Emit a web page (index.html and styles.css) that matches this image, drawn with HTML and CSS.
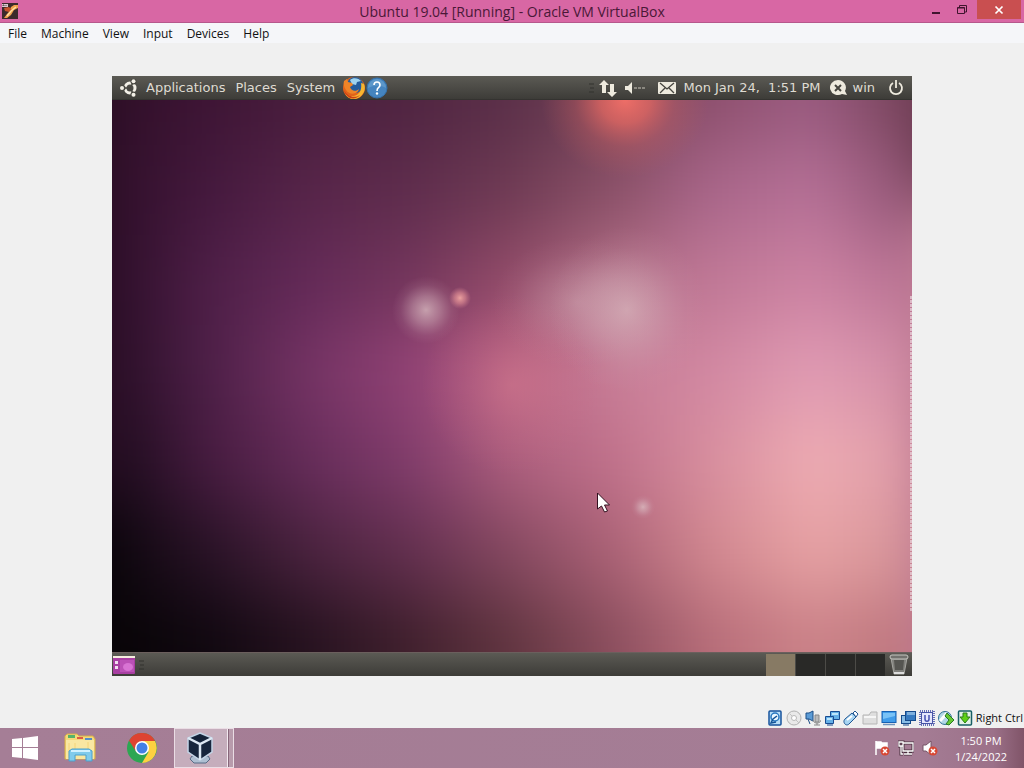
FILE: index.html
```html
<!DOCTYPE html>
<html lang="en">
<head>
    <meta charset="UTF-8">
    <meta name="viewport" content="width=device-width, initial-scale=1.0">
    <title>Ubuntu 19.04 [Running] - Oracle VM VirtualBox</title>
    <link rel="stylesheet" href="styles.css">
</head>
<body>
    <header class="titlebar">
        <svg class="app-icon" width="16" height="16" viewBox="0 0 16 16">
            <rect width="16" height="16" fill="#3c2a2b"/>
            <path d="M9 4l3-2h4v3l-4 2-3 5-4 3H2l3-4 2-2z" fill="#f2a04c"/>
            <path d="M2 5l5-1 3 3-3 2-4-1z" fill="#c4532c"/>
            <path d="M5 13l4-5 5-4" stroke="#ffe0a0" stroke-width="1.500" fill="none"/>
            <path d="M0 1h6v3H0z" fill="#d9c9cf"/>
            <path d="M1 3V2h1v1M4 3V2" stroke="#5b4349" fill="none"/>
        </svg>
        <h1 class="title">Ubuntu 19.04 [Running] - Oracle VM VirtualBox</h1>
        <div class="window-buttons">
            <button class="win-btn" aria-label="Minimize">
                <svg width="10" height="10" viewBox="0 0 10 10"><path d="M1 7h8v2H1z" fill="#40142e"/></svg>
            </button>
            <button class="win-btn" aria-label="Restore">
                <svg width="12" height="11" viewBox="0 0 12 11"><path d="M1.500 3.500h7v6h-7zM1.500 4h7M3.500 3V1.500h7V8H9" stroke="#40142e" fill="none"/></svg>
            </button>
            <button class="win-btn close" aria-label="Close">
                <svg width="10" height="10" viewBox="0 0 10 10"><path d="M1.500 1.500l7 7M8.500 1.500l-7 7" stroke="#fff" stroke-width="1.700"/></svg>
            </button>
        </div>
    </header>

    <nav class="menubar">
        <button>File</button>
        <button>Machine</button>
        <button>View</button>
        <button>Input</button>
        <button>Devices</button>
        <button>Help</button>
    </nav>

    <main class="viewport">
        <section class="guest">
            <div class="panel panel-top">
                <svg class="ubuntu" width="18" height="18" viewBox="0 0 18 18">
                    <circle cx="10" cy="9" r="5" fill="none" stroke="#f2efe6" stroke-width="3"/>
                    <path d="M10 9L4 9M10 9l4-7M10 9l4 7" stroke="#484741" stroke-width="1.500"/>
                    <circle cx="2.500" cy="9" r="3" fill="#484741"/><circle cx="13.500" cy="2.500" r="3" fill="#484741"/><circle cx="13.500" cy="15.500" r="3" fill="#484741"/>
                    <circle cx="2" cy="9" r="2" fill="#f2efe6"/><circle cx="13.500" cy="2.300" r="2" fill="#f2efe6"/><circle cx="13.500" cy="15.700" r="2" fill="#f2efe6"/>
                </svg>
                <button>Applications</button>
                <button>Places</button>
                <button>System</button>
                <span class="launchers">
                    <button aria-label="Firefox">
                        <svg width="24" height="24" viewBox="0 0 24 24">
                            <circle cx="12" cy="12" r="11" fill="#e2631a"/>
                            <circle cx="13" cy="9" r="8" fill="#245d9c"/>
                            <path d="M8 4c3-3 9-2 11 1l-4 1-1 3-4-1z" fill="#9ed3ee"/>
                            <path d="M2 5l3-2 1 3 4 1 1 2-3 2c1 4 6 5 9 2-1 5-9 7-13 1-2-3-3-6-2-9z" fill="#ef8427"/>
                            <path d="M22 8c3 7-3 15-10 15-4 0-7-2-9-5 8 5 18 1 16-11z" fill="#f6b530"/>
                            <path d="M2 14c3 6 10 9 16 5-5 6-14 4-16-5z" fill="#cc3f17"/>
                        </svg>
                    </button>
                    <button aria-label="Help">
                        <svg width="22" height="22" viewBox="0 0 22 22">
                            <circle cx="11" cy="11" r="10" fill="#4584bf" stroke="#3672ac"/>
                            <path d="M2 11a9 9 0 0 1 18 0c-5-3-12-3-18 0z" fill="#5c97ca"/>
                            <path d="M8 8c0-4 6-4 6 0 0 3-3 2-3 6" stroke="#fff" stroke-width="1.600" fill="none"/>
                            <circle cx="11" cy="16.500" r="1.200" fill="#fff"/>
                        </svg>
                    </button>
                </span>
                <div class="indicators">
                    <svg class="grip" width="6" height="10" viewBox="0 0 6 10"><path d="M0 1h5M1 5h4M0 9h5" stroke="#33322f"/></svg>
                    <svg class="net" width="18" height="18" viewBox="0 0 18 18"><path d="M5 1l5 5H7v8H3V6H0zM13 18l-5-5h3V5h4v8h3z" fill="#eeeade"/></svg>
                    <svg class="sound" width="22" height="14" viewBox="0 0 22 14"><path d="M0 5h3l4-4v12l-4-4H0z" fill="#eeeade"/><path d="M9 7h3M13 7h3M17 7h3" stroke="#c9c5ba"/></svg>
                    <svg class="mail" width="18" height="14" viewBox="0 0 18 14"><rect y="1" width="18" height="12" rx="1" fill="#eeeade"/><path d="M2 2l7 6 7-6M2 12l5-5M16 12l-5-5" stroke="#45443e" stroke-width="1.300" fill="none"/></svg>
                    <time class="guest-clock">Mon Jan 24,&nbsp; 1:51 PM</time>
                    <svg class="chat" width="18" height="16" viewBox="0 0 18 16"><path d="M8 0a8 7.500 0 1 0 4 14l5 1-2-4A8 7.500 0 0 0 8 0z" fill="#eeeade"/><path d="M5 5l6 6M11 5l-6 6" stroke="#45443e" stroke-width="2"/></svg>
                    <button class="user">win</button>
                    <button class="power" aria-label="Power">
                        <svg width="16" height="16" viewBox="0 0 16 16"><path d="M5 3a6 6 0 1 0 6 0M8 0v8" stroke="#eeeade" stroke-width="1.800" fill="none"/></svg>
                    </button>
                </div>
            </div>

            <svg class="wallpaper" viewBox="0 0 800 552" preserveAspectRatio="none">
                <defs>
                    <filter id="mix" x="0" y="0" width="1200" height="1000" filterUnits="userSpaceOnUse" color-interpolation-filters="sRGB"><feGaussianBlur stdDeviation="20 34"/></filter>
                    <linearGradient id="r1"><stop offset="0" stop-color="#300f28"/><stop offset=".125" stop-color="#3e1535"/><stop offset=".25" stop-color="#4a1e3e"/><stop offset=".375" stop-color="#502541"/><stop offset=".5" stop-color="#5b3049"/><stop offset=".625" stop-color="#744458"/><stop offset=".75" stop-color="#8e506e"/><stop offset=".875" stop-color="#9a5b80"/><stop offset="1" stop-color="#754259"/></linearGradient>
                    <linearGradient id="r2"><stop offset="0" stop-color="#300f2a"/><stop offset=".125" stop-color="#45193e"/><stop offset=".25" stop-color="#572549"/><stop offset=".375" stop-color="#5f2d4d"/><stop offset=".5" stop-color="#6f3b54"/><stop offset=".625" stop-color="#8a5067"/><stop offset=".75" stop-color="#a9668a"/><stop offset=".875" stop-color="#b57096"/><stop offset="1" stop-color="#905474"/></linearGradient>
                    <linearGradient id="r3"><stop offset="0" stop-color="#2d0e29"/><stop offset=".125" stop-color="#4f1f48"/><stop offset=".25" stop-color="#642a58"/><stop offset=".375" stop-color="#74365c"/><stop offset=".5" stop-color="#934c69"/><stop offset=".625" stop-color="#b26e86"/><stop offset=".75" stop-color="#c07896"/><stop offset=".875" stop-color="#cc82a2"/><stop offset="1" stop-color="#b87293"/></linearGradient>
                    <linearGradient id="r4"><stop offset="0" stop-color="#290e26"/><stop offset=".125" stop-color="#4f2049"/><stop offset=".25" stop-color="#763465"/><stop offset=".375" stop-color="#934376"/><stop offset=".5" stop-color="#ba6384"/><stop offset=".625" stop-color="#c87e97"/><stop offset=".75" stop-color="#d288a2"/><stop offset=".875" stop-color="#e09bb3"/><stop offset="1" stop-color="#d28da6"/></linearGradient>
                    <linearGradient id="r5"><stop offset="0" stop-color="#1c0b1c"/><stop offset=".125" stop-color="#481c41"/><stop offset=".25" stop-color="#672d5b"/><stop offset=".375" stop-color="#823d6c"/><stop offset=".5" stop-color="#ad5f7e"/><stop offset=".625" stop-color="#c0718b"/><stop offset=".75" stop-color="#d88f9f"/><stop offset=".875" stop-color="#eeacb3"/><stop offset="1" stop-color="#de9ba8"/></linearGradient>
                    <linearGradient id="r6"><stop offset="0" stop-color="#0c060d"/><stop offset=".125" stop-color="#2a1327"/><stop offset=".25" stop-color="#4b233f"/><stop offset=".375" stop-color="#643050"/><stop offset=".5" stop-color="#864961"/><stop offset=".625" stop-color="#ab6276"/><stop offset=".75" stop-color="#d28890"/><stop offset=".875" stop-color="#e7a2a4"/><stop offset="1" stop-color="#d69499"/></linearGradient>
                    <linearGradient id="r7"><stop offset="0" stop-color="#070406"/><stop offset=".125" stop-color="#100810"/><stop offset=".25" stop-color="#26121f"/><stop offset=".375" stop-color="#40202d"/><stop offset=".5" stop-color="#613540"/><stop offset=".625" stop-color="#8b4e5e"/><stop offset=".75" stop-color="#b76d79"/><stop offset=".875" stop-color="#cb8288"/><stop offset="1" stop-color="#bd767d"/></linearGradient>
                    <radialGradient id="orange"><stop offset="0" stop-color="#f47068" stop-opacity=".95"/><stop offset=".3" stop-color="#ee6b62" stop-opacity=".7"/><stop offset=".6" stop-color="#d56360" stop-opacity=".3"/><stop offset="1" stop-color="#c06060" stop-opacity="0"/></radialGradient>
                    <radialGradient id="mist"><stop offset="0" stop-color="#dcc0c4" stop-opacity=".75"/><stop offset=".4" stop-color="#d6b4bd" stop-opacity=".45"/><stop offset=".75" stop-color="#d0a8b5" stop-opacity=".12"/><stop offset="1" stop-color="#d0a0b0" stop-opacity="0"/></radialGradient>
                    <radialGradient id="spark"><stop offset="0" stop-color="#f0a6a2" stop-opacity=".95"/><stop offset=".5" stop-color="#e28f95" stop-opacity=".6"/><stop offset="1" stop-color="#d08090" stop-opacity="0"/></radialGradient>
                    <radialGradient id="rose"><stop offset="0" stop-color="#dc8090" stop-opacity=".4"/><stop offset=".5" stop-color="#d4788c" stop-opacity=".18"/><stop offset="1" stop-color="#d07088" stop-opacity="0"/></radialGradient>
                </defs>
                <!-- colour bands, blurred into each other -->
                <g transform="translate(-200 -200)">
                    <g filter="url(#mix)">
                        <path d="M0 0h200v1000H0z" fill="#280d23"/>
                        <path d="M0 600h200v400H0z" fill="#080408"/>
                        <path d="M1000 0h200v300h-200z" fill="#6c3c52"/>
                        <path d="M1000 300h200v700h-200z" fill="#bd7991"/>
                        <rect x="200" y="0" width="800" height="245" fill="url(#r1)"/>
                        <rect x="200" y="245" width="800" height="90" fill="url(#r2)"/>
                        <rect x="200" y="335" width="800" height="90" fill="url(#r3)"/>
                        <rect x="200" y="425" width="800" height="90" fill="url(#r4)"/>
                        <rect x="200" y="515" width="800" height="90" fill="url(#r5)"/>
                        <rect x="200" y="605" width="800" height="90" fill="url(#r6)"/>
                        <rect x="200" y="695" width="800" height="305" fill="url(#r7)"/>
                    </g>
                </g>
                <!-- lights -->
                <ellipse cx="513" cy="0" rx="84" ry="78" fill="url(#orange)"/>
                <ellipse cx="400" cy="285" rx="90" ry="90" fill="url(#rose)"/>
                <ellipse cx="465" cy="202" rx="85" ry="65" fill="url(#mist)" opacity=".45"/>
                <ellipse cx="515" cy="210" rx="78" ry="84" fill="url(#mist)" opacity=".8"/>
                <circle cx="314" cy="210" r="34" fill="url(#mist)"/>
                <circle cx="348" cy="198" r="11" fill="url(#spark)"/>
                <circle cx="531" cy="407" r="12" fill="url(#mist)"/>
                <path d="M799 196v316" stroke="#ead5dc" stroke-width="2" stroke-dasharray="3 1" opacity=".7"/>
                <path d="M485.500 393v16l4-3 3 6 3-1-3-6h5z" fill="#fff" stroke="#32111f"/>
            </svg>

            <div class="panel panel-bottom">
                <button class="show-desktop" aria-label="Show desktop">
                    <svg width="22" height="20" viewBox="0 0 22 20"><rect width="22" height="18" y="1" rx="1" fill="#a83fa2"/><path d="M7 5h14v12H7z" fill="#bb50b6"/><ellipse cx="15" cy="12" rx="5" ry="4" fill="#d873d3"/><path d="M0 1h22v2H0z" fill="#f5eedf"/><path d="M2 6h3v3H2zM2 11h3v3H2z" fill="#f3def1"/></svg>
                </button>
                <svg class="grip" width="6" height="10" viewBox="0 0 6 10"><path d="M0 1h5M1 5h4M0 9h5" stroke="#33322f"/></svg>
                <div class="workspaces">
                    <button class="workspace active" aria-label="Workspace 1"></button>
                    <button class="workspace" aria-label="Workspace 2"></button>
                    <button class="workspace" aria-label="Workspace 3"></button>
                    <button class="workspace" aria-label="Workspace 4"></button>
                </div>
                <button class="trash" aria-label="Trash">
                    <svg width="20" height="22" viewBox="0 0 20 22"><path d="M2 4h16l-3 16H5z" fill="#80807c" stroke="#a5a5a0"/><path d="M5 6h10l-1 10H6z" fill="#555551"/><path d="M5 19h10" stroke="#ddd" stroke-width="2"/><rect x="1" y="1" width="18" height="4" rx="2" fill="#72726e" stroke="#c6c6c0"/></svg>
                </button>
            </div>
        </section>
    </main>

    <footer class="statusbar">
        <!-- hard disk -->
        <svg width="16" height="16" viewBox="0 0 16 16"><rect x="2" y="1" width="12" height="14" rx="1" fill="#b8def7" stroke="#16539d" stroke-width="1.500"/><circle cx="8" cy="7" r="4" fill="#eaf7ff" stroke="#2878c1" stroke-width="1.500"/><path d="M10 6L6 9l-2 4 5-1" stroke="#135397" stroke-width="1.500" fill="none"/></svg>
        <!-- optical disk -->
        <svg width="16" height="16" viewBox="0 0 16 16"><circle cx="8" cy="8" r="7" fill="#e9e9e9" stroke="#b2b2b2"/><circle cx="8" cy="8" r="2.500" fill="#fff" stroke="#b9b9b9"/><path d="M4 4l2 2M10 10l3 3" stroke="#c2c2c2"/></svg>
        <!-- audio -->
        <svg width="16" height="16" viewBox="0 0 16 16"><path d="M1 3h3l4-2v10L4 9H1z" fill="#5c9cd6" stroke="#1d4e87"/><path d="M10 5h4v7h-4z" fill="#bbb" stroke="#888"/><path d="M8 10c0 4 8 4 8 0M12 13v2M9 15h6" stroke="#888" fill="none"/><path d="M3 9l2 5" stroke="#1d4e87"/></svg>
        <!-- network -->
        <svg width="16" height="16" viewBox="0 0 16 16"><path d="M6.500 1.500h9v8h-9z" fill="#65b0e7" stroke="#174b91"/><path d="M8 3h6v2H8z" fill="#bde5fb"/><path d="M1.500 6.500h8v7h-8z" fill="#65b0e7" stroke="#174b91"/><path d="M3 8h5v2H3z" fill="#bde5fb"/><path d="M3 15h6" stroke="#174b91"/></svg>
        <!-- usb -->
        <svg width="16" height="16" viewBox="0 0 16 16"><path d="M2 9l7-6 4 4-7 7c-3 3-7-2-4-5z" fill="#a6d4f2" stroke="#205692"/><path d="M10 3l2-2 3 3-2 3z" fill="#fff" stroke="#205692"/><path d="M4 10l5-4" stroke="#fff" stroke-width="2"/></svg>
        <!-- shared folders -->
        <svg width="16" height="16" viewBox="0 0 16 16"><path d="M1 5h6l2-3h6v12H1z" fill="#dedede" stroke="#b5b5b5"/><path d="M2 7h12" stroke="#f6f6f6" stroke-width="2"/></svg>
        <!-- display -->
        <svg width="16" height="16" viewBox="0 0 16 16"><rect x="1" y="1.500" width="14" height="11" fill="#409cea" stroke="#1760b2"/><path d="M2 3h12v3L2 9z" fill="#79c2f6"/><path d="M2 14.500h12" stroke="#7094bd" stroke-width="1.500"/></svg>
        <!-- recording -->
        <svg width="16" height="16" viewBox="0 0 16 16"><rect x="1.500" y="5.500" width="9" height="8" fill="#88bde6" stroke="#164b8b"/><rect x="5.500" y="1.500" width="10" height="9" fill="#367ac0" stroke="#164b8b"/><path d="M8 2v3M10 2v3M12 2v3M14 2v3" stroke="#c5e5fa"/><path d="M3 15h6" stroke="#164b8b"/></svg>
        <!-- processor -->
        <svg width="16" height="16" viewBox="0 0 16 16"><rect x="1" y="1" width="14" height="14" fill="none" stroke="#6870b8" stroke-width="2" stroke-dasharray="1 1"/><rect x="2.500" y="2.500" width="11" height="11" fill="#e5e6fc" stroke="#4854a6"/><path d="M6 5v4c0 3 4 3 4 0V5" fill="none" stroke="#4650b1" stroke-width="1.500"/></svg>
        <!-- mouse integration -->
        <svg width="16" height="16" viewBox="0 0 16 16"><circle cx="7" cy="8" r="6.500" fill="#b2d7e7" stroke="#306f94"/><path d="M2 11L9 3" stroke="#fff" stroke-width="3"/><path d="M9 3l7 7-5 5-3-1 3-4-4-4z" fill="#66c934" stroke="#287725"/></svg>
        <!-- keyboard capture -->
        <svg width="16" height="16" viewBox="0 0 16 16"><rect x="1.500" y="1" width="13" height="14" rx="1" fill="#e3f1e7" stroke="#185f66" stroke-width="1.500"/><path d="M6 3h4v4h3l-5 6-5-6h3z" fill="#5fd016" stroke="#2b7b19"/></svg>
        <span class="host-key">Right Ctrl</span>
    </footer>

    <div class="taskbar">
        <button class="task start" aria-label="Start">
            <svg width="28" height="26" viewBox="0 0 28 26"><path d="M1 4l10-1v9H1zM12 3l15-2v11H12zM1 13h10v10L1 22zM12 13h15v12l-15-2z" fill="#fff"/></svg>
        </button>
        <button class="task explorer" aria-label="File Explorer">
            <svg width="32" height="30" viewBox="0 0 32 30"><path d="M1 3l2-2h10l2 2h14l2 3v20H1z" fill="#f4d979" stroke="#d6ad48"/><path d="M4 2h7v3H4z" fill="#55b36a"/><path d="M13 4h6v2h-6z" fill="#dc5c42"/><path d="M21 5h7v2h-7z" fill="#538ec8"/><path d="M2 7h28v19H2z" fill="#f9e7a2"/><path d="M5 10v15M11 10v15M24 9v15" stroke="#f4d477"/><path d="M5 28V18l3-2h17l3 2v10h-6v-6H11v6z" fill="#80cbec" stroke="#4ba0cc"/><path d="M7 18h19" stroke="#d0f1ff" stroke-width="2"/></svg>
        </button>
        <button class="task chrome" aria-label="Google Chrome">
            <svg width="30" height="30" viewBox="0 0 30 30"><circle cx="15" cy="15" r="15" fill="#2da652"/><path d="M15 15L2 7.500A15 15 0 0 1 28 7.500z" fill="#de4332"/><path d="M2 7.500l7 11L15 8z" fill="#de4332"/><path d="M15 8h13A15 15 0 0 1 15 30l6.500-11z" fill="#fdd142"/><circle cx="15" cy="15" r="7" fill="#fff"/><circle cx="15" cy="15" r="5.500" fill="#4380e5"/></svg>
        </button>
        <button class="task vbox" aria-label="Oracle VM VirtualBox">
            <svg width="28" height="32" viewBox="0 0 28 32"><path d="M6 24h16l2 3-4 4H8l-4-4z" fill="#aebfd2" stroke="#566b86"/><path d="M14 1l12 5v14l-12 8-12-8V6z" fill="#17263d" stroke="#c3d4e6" stroke-width="1.500"/><path d="M2 6l12 6 12-6M14 12v16" stroke="#dce8f3" stroke-width="2.500" fill="none"/><path d="M7 6l7-3 7 3-7 3z" fill="#132137"/></svg>
        </button>
        <div class="tray">
            <svg width="16" height="16" viewBox="0 0 16 16"><path d="M2 1v14M3 2h4l1 1h5v6H8L7 8H3z" fill="#fff" stroke="#fff" stroke-width="1.500"/><circle cx="11" cy="11" r="4.500" fill="#d84834"/><path d="M9 9l4 4M13 9l-4 4" stroke="#fff" stroke-width="1.500"/></svg>
            <svg width="16" height="16" viewBox="0 0 16 16"><path d="M5 3h10v8H5zM10 11v3M6 14h8M1 2h4v4H1zM3 6v8h2" fill="none" stroke="#49303f" stroke-width="3"/><path d="M5 3h10v8H5zM10 11v3M6 14h8M1 2h4v4H1zM3 6v8h2" fill="none" stroke="#fff" stroke-width="1.300"/></svg>
            <svg width="16" height="16" viewBox="0 0 16 16"><path d="M1 5h3l5-4v14l-5-4H1z" fill="#fff" stroke="#765466"/><circle cx="11" cy="11" r="4.500" fill="#d84834"/><path d="M9 9l4 4M13 9l-4 4" stroke="#fff" stroke-width="1.500"/></svg>
        </div>
        <div class="clock">
            <time>1:50 PM</time>
            <time>1/24/2022</time>
        </div>
    </div>
</body>
</html>
```

FILE: styles.css
```css
* {
    box-sizing: border-box;
}

body {
    margin: 0;
    min-height: 100vh;
    display: flex;
    flex-direction: column;
    background: #f0f0f0;
    font-family: "Open Sans", "Noto Sans", sans-serif;
    font-size: 12px;
    color: #111;
}

button {
    margin: 0;
    padding: 0;
    border: none;
    background: none;
    font: inherit;
    color: inherit;
    white-space: nowrap;
}

svg {
    display: block;
    flex-shrink: 0;
}

/* Window title */
.titlebar {
    display: grid;
    grid-template-columns: 1fr auto 1fr;
    height: 23px;
    background: #d867a4;
    border-bottom: 1px solid #b6578c;
}

.app-icon {
    margin: 3px 2px;
}

.title {
    margin: 0;
    font-size: 14px;
    font-weight: 400;
    line-height: 24px;
    color: #4a1837;
}

.window-buttons {
    display: flex;
    justify-content: flex-end;
    align-items: flex-start;
    padding-right: 3px;
}

.win-btn {
    width: 26px;
    height: 19px;
    display: flex;
    align-items: center;
    justify-content: center;
}

.win-btn.close {
    width: 44px;
    margin-left: 2px;
    background: #c94f50;
}

.menubar {
    display: flex;
    height: 20px;
    padding-left: 1px;
    background: #f5f6f9;
}

.menubar button {
    padding: 0 7px;
    line-height: 22px;
}

.viewport {
    flex: 1;
    display: flex;
    padding: 33px 112px 32px;
}

/* Guest desktop */
.guest {
    flex: 1;
    min-width: 0;
    display: flex;
    flex-direction: column;
    font-family: "DejaVu Sans", sans-serif;
    font-size: 13px;
    color: #dfdbd2;
}

.panel {
    display: flex;
    align-items: center;
    height: 24px;
    background: linear-gradient(#5b5a54, #3d3c38);
}

.panel-top {
    padding: 0 8px;
    border-bottom: 1px solid #343330;
}

.panel-top button {
    line-height: 22px;
    margin-right: 10px;
}

.ubuntu {
    margin-right: 8px;
}

.launchers {
    display: flex;
    align-items: center;
    margin-left: -3px;
}

.panel-top .launchers button {
    margin: 0;
}

.indicators {
    display: flex;
    align-items: center;
    margin-left: auto;
}

.indicators .net {
    margin: 0 8px 0 4px;
}

.indicators .sound {
    margin-right: 11px;
}

.indicators .mail {
    margin-right: 7px;
}

.guest-clock {
    line-height: 22px;
    margin-right: 9px;
}

.chat {
    margin-right: 5px;
}

.panel-top .user {
    margin-right: 13px;
}

.panel-top .power {
    margin: 0;
}

.wallpaper {
    flex: 1;
    width: 100%;
    min-height: 0;
}

.panel-bottom {
    padding: 0 3px 0 1px;
    gap: 4px;
    border-top: 1px solid #6b5f5d;
}

.workspaces {
    display: flex;
    gap: 1px;
    margin-left: auto;
    background: #4c4b47;
}

.workspace {
    width: 29px;
    height: 22px;
    background: #292927;
}

.workspace.active {
    background: #877a64;
}

/* VirtualBox status icons */
.statusbar {
    display: flex;
    justify-content: flex-end;
    align-items: center;
    gap: 3px;
    height: 20px;
    padding-right: 1px;
}

.host-key {
    font-size: 11px;
    line-height: 20px;
    white-space: nowrap;
}

/* Host taskbar */
.taskbar {
    display: flex;
    align-items: center;
    height: 40px;
    background: linear-gradient(90deg, #a57e96, #a47c94 90%, #9c7189 97%, #805468);
}

.task {
    display: flex;
    align-items: center;
    justify-content: center;
    height: 40px;
    width: 62px;
}

.task.start {
    width: 49px;
}

.task.vbox {
    width: 60px;
    margin-left: 1px;
    padding-right: 9px;
    border: 1px solid #eadde5;
    background: linear-gradient(90deg, #c5adbc 52px, #f2e8ef 52px, #f2e8ef 53px, #87667a 53px, #87667a 54px, #b89bac 54px);
}

.tray {
    display: flex;
    gap: 8px;
    margin-left: auto;
}

.clock {
    display: flex;
    flex-direction: column;
    width: 86px;
    padding-top: 1px;
    text-align: center;
    font-size: 11px;
    line-height: 16px;
    color: #fff;
}
```
